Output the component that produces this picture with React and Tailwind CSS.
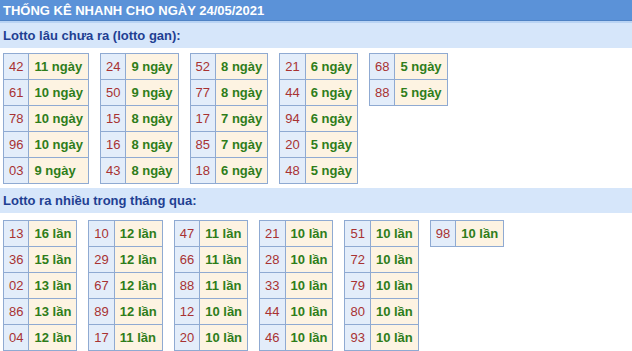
import React from "react";

const gan = [
  [["42", "11"], ["61", "10"], ["78", "10"], ["96", "10"], ["03", "9"]],
  [["24", "9"], ["50", "9"], ["15", "8"], ["16", "8"], ["43", "8"]],
  [["52", "8"], ["77", "8"], ["17", "7"], ["85", "7"], ["18", "6"]],
  [["21", "6"], ["44", "6"], ["94", "6"], ["20", "5"], ["48", "5"]],
  [["68", "5"], ["88", "5"]],
];

const nhieu = [
  [["13", "16"], ["36", "15"], ["02", "13"], ["86", "13"], ["04", "12"]],
  [["10", "12"], ["29", "12"], ["67", "12"], ["89", "12"], ["17", "11"]],
  [["47", "11"], ["66", "11"], ["88", "11"], ["12", "10"], ["20", "10"]],
  [["21", "10"], ["28", "10"], ["33", "10"], ["44", "10"], ["46", "10"]],
  [["51", "10"], ["72", "10"], ["79", "10"], ["80", "10"], ["93", "10"]],
  [["98", "10"]],
];

const LottoTable = ({ rows, unit }) => (
  <table className="border-collapse self-start">
    <tbody>
      {rows.map(([num, count]) => (
        <tr key={num} className="h-[26px]">
          <td className="border border-[#8faad2] bg-[#e3edfa] px-[5px] text-[#a83232] font-normal text-center">
            {num}
          </td>
          <td className="border border-[#8faad2] bg-[#fdf3e2] px-[5px] text-[#2e7d1a] font-bold whitespace-nowrap">
            {count} {unit}
          </td>
        </tr>
      ))}
    </tbody>
  </table>
);

const SubHeader = ({ children }) => (
  <div className="h-[25px] bg-[#d6e6fa] px-[3px] flex items-center text-[13px] font-bold text-[#1f3f92]">
    {children}
  </div>
);

export default function App() {
  return (
    <div className="w-[632px] h-[351px] overflow-hidden bg-white font-['Liberation_Sans',Arial,sans-serif] text-[13px] leading-[15px]">
      <div className="h-[21px] bg-[#5b92d8] border-b border-[#4f82c4] px-[3px] flex items-center text-white font-bold text-[13px]">
        THỐNG KÊ NHANH CHO NGÀY 24/05/2021
      </div>
      <div className="h-[2px] bg-[#b9d3f3]" />
      <SubHeader>Lotto lâu chưa ra (lotto gan):</SubHeader>
      <div className="flex gap-[11px] px-[3px] pt-[5px] h-[140px]">
        {gan.map((t, i) => (
          <LottoTable key={i} rows={t} unit="ngày" />
        ))}
      </div>
      <SubHeader>Lotto ra nhiều trong tháng qua:</SubHeader>
      <div className="flex gap-[11px] px-[3px] pt-[7px]">
        {nhieu.map((t, i) => (
          <LottoTable key={i} rows={t} unit="lần" />
        ))}
      </div>
    </div>
  );
}
